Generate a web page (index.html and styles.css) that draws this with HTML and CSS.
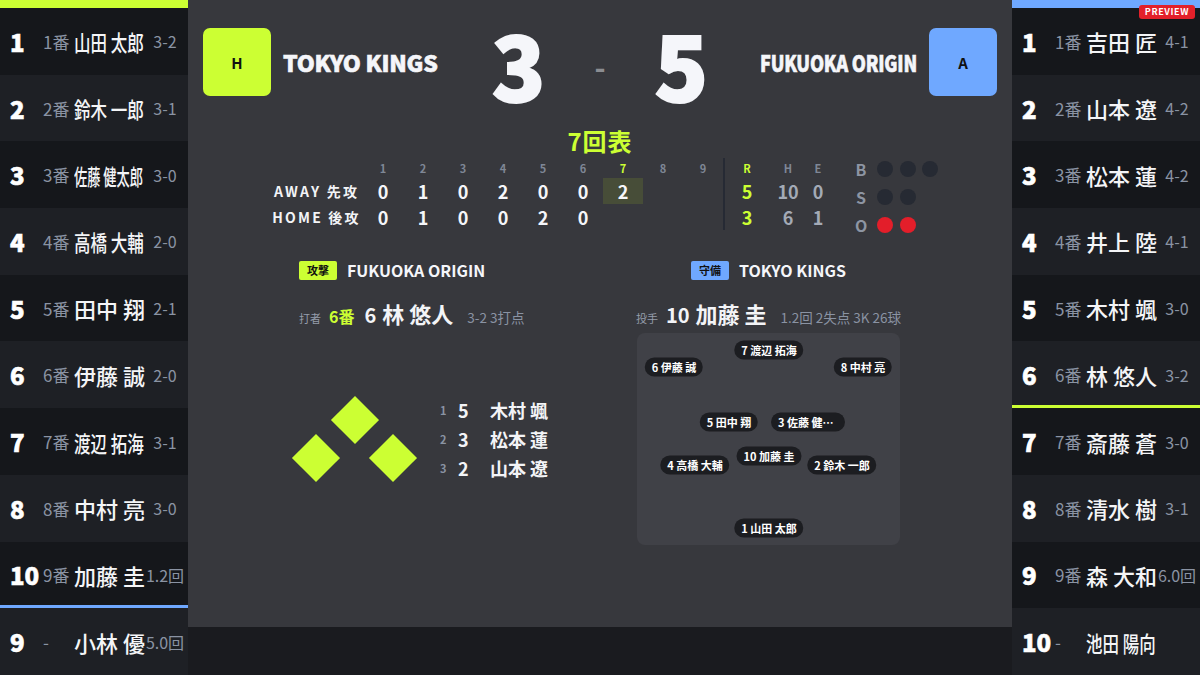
FILE: index.html
```html
<!DOCTYPE html>
<html lang="ja">
<head>
<meta charset="utf-8">
<title>Scoreboard</title>
<link rel="stylesheet" href="styles.css">
</head>
<body>
<div class="app">
  <aside class="lineup">
    <div class="topbar lime"></div>
    <div class="row"><span class="no">1</span><span class="ord">1番</span><span class="name"><span class="fit4">山田 太郎</span></span><span class="stat">3-2</span></div>
    <div class="row"><span class="no">2</span><span class="ord">2番</span><span class="name"><span class="fit4">鈴木 一郎</span></span><span class="stat">3-1</span></div>
    <div class="row"><span class="no">3</span><span class="ord">3番</span><span class="name"><span class="fit5">佐藤 健太郎</span></span><span class="stat">3-0</span></div>
    <div class="row"><span class="no">4</span><span class="ord">4番</span><span class="name"><span class="fit4">高橋 大輔</span></span><span class="stat">2-0</span></div>
    <div class="row"><span class="no">5</span><span class="ord">5番</span><span class="name">田中 翔</span><span class="stat">2-1</span></div>
    <div class="row"><span class="no">6</span><span class="ord">6番</span><span class="name">伊藤 誠</span><span class="stat">2-0</span></div>
    <div class="row"><span class="no">7</span><span class="ord">7番</span><span class="name"><span class="fit4">渡辺 拓海</span></span><span class="stat">3-1</span></div>
    <div class="row"><span class="no">8</span><span class="ord">8番</span><span class="name">中村 亮</span><span class="stat">3-0</span></div>
    <div class="row cut-blue"><span class="no">10</span><span class="ord">9番</span><span class="name">加藤 圭</span><span class="stat">1.2回</span></div>
    <div class="row"><span class="no">9</span><span class="ord">-</span><span class="name">小林 優</span><span class="stat">5.0回</span></div>
  </aside>

  <main class="center">
    <div class="panel">
      <header class="match">
        <div class="team">
          <div class="badge lime">H</div>
          <div class="tname">TOKYO KINGS</div>
        </div>
        <div class="score"><span class="pts">3</span><span class="dash">-</span><span class="pts">5</span></div>
        <div class="team right">
          <div class="tname squeeze">FUKUOKA ORIGIN</div>
          <div class="badge blue">A</div>
        </div>
      </header>

      <div class="inning">7回表</div>

      <div class="board-row">
        <div class="board">
          <div class="vsep"></div>
          <div class="lbl"></div>
          <div class="hd">1</div><div class="hd">2</div><div class="hd">3</div><div class="hd">4</div><div class="hd">5</div><div class="hd">6</div><div class="hd cur">7</div><div class="hd">8</div><div class="hd">9</div>
          <div class="hd cur">R</div><div class="hd">H</div><div class="hd">E</div>

          <div class="lbl">AWAY 先攻</div>
          <div class="v">0</div><div class="v">1</div><div class="v">0</div><div class="v">2</div><div class="v">0</div><div class="v">0</div><div class="v now">2</div><div class="v"></div><div class="v"></div>
          <div class="v run">5</div><div class="v dim">10</div><div class="v dim">0</div>

          <div class="lbl">HOME 後攻</div>
          <div class="v">0</div><div class="v">1</div><div class="v">0</div><div class="v">0</div><div class="v">2</div><div class="v">0</div><div class="v"></div><div class="v"></div><div class="v"></div>
          <div class="v run">3</div><div class="v dim">6</div><div class="v dim">1</div>
        </div>

        <div class="bso">
          <div class="k">B</div><div class="dots"><span class="dot"></span><span class="dot"></span><span class="dot"></span></div>
          <div class="k">S</div><div class="dots"><span class="dot"></span><span class="dot"></span></div>
          <div class="k">O</div><div class="dots"><span class="dot on"></span><span class="dot on"></span></div>
        </div>
      </div>

      <div class="lower">
        <section class="att">
          <div class="side-head"><span class="tag lime">攻撃</span><span class="side-team">FUKUOKA ORIGIN</span></div>
          <div class="pline">
            <span class="role">打者</span><span class="bno">6番</span><span class="pno">6</span><span class="pname">林 悠人</span><span class="pstat">3-2 3打点</span>
          </div>
          <div class="runners">
            <div class="bases">
              <span class="base b2"></span>
              <span class="base b3"></span>
              <span class="base b1"></span>
            </div>
            <div class="rlist">
              <span class="ri">1</span><span class="rn">5</span><span class="rname">木村 颯</span>
              <span class="ri">2</span><span class="rn">3</span><span class="rname">松本 蓮</span>
              <span class="ri">3</span><span class="rn">2</span><span class="rname">山本 遼</span>
            </div>
          </div>
        </section>

        <section class="def">
          <div class="side-head"><span class="tag blue">守備</span><span class="side-team">TOKYO KINGS</span></div>
          <div class="pline">
            <span class="role">投手</span><span class="pno">10</span><span class="pname">加藤 圭</span><span class="pstat">1.2回 2失点 3K 26球</span>
          </div>
          <div class="field">
            <span class="chip f7">7 渡辺 拓海</span>
            <span class="chip f6">6 伊藤 誠</span>
            <span class="chip f8">8 中村 亮</span>
            <span class="chip f5">5 田中 翔</span>
            <span class="chip f3 cut">3 佐藤 健太郎</span>
            <span class="chip f10">10 加藤 圭</span>
            <span class="chip f4">4 高橋 大輔</span>
            <span class="chip f2">2 鈴木 一郎</span>
            <span class="chip f1">1 山田 太郎</span>
          </div>
        </section>
      </div>
    </div>
  </main>

  <aside class="lineup">
    <div class="topbar blue"></div>
    <div class="row"><span class="no">1</span><span class="ord">1番</span><span class="name">吉田 匠</span><span class="stat">4-1</span></div>
    <div class="row"><span class="no">2</span><span class="ord">2番</span><span class="name">山本 遼</span><span class="stat">4-2</span></div>
    <div class="row"><span class="no">3</span><span class="ord">3番</span><span class="name">松本 蓮</span><span class="stat">4-2</span></div>
    <div class="row"><span class="no">4</span><span class="ord">4番</span><span class="name">井上 陸</span><span class="stat">4-1</span></div>
    <div class="row"><span class="no">5</span><span class="ord">5番</span><span class="name">木村 颯</span><span class="stat">3-0</span></div>
    <div class="row cut-lime"><span class="no">6</span><span class="ord">6番</span><span class="name">林 悠人</span><span class="stat">3-2</span></div>
    <div class="row"><span class="no">7</span><span class="ord">7番</span><span class="name">斎藤 蒼</span><span class="stat">3-0</span></div>
    <div class="row"><span class="no">8</span><span class="ord">8番</span><span class="name">清水 樹</span><span class="stat">3-1</span></div>
    <div class="row"><span class="no">9</span><span class="ord">9番</span><span class="name">森 大和</span><span class="stat">6.0回</span></div>
    <div class="row"><span class="no">10</span><span class="ord">-</span><span class="name"><span class="fit4">池田 陽向</span></span><span class="stat"></span></div>
    <span class="preview">PREVIEW</span>
  </aside>
</div>
</body>
</html>
```

FILE: styles.css
```css
* { box-sizing: border-box; margin: 0; padding: 0; }
html, body { width: 1200px; height: 675px; overflow: hidden; }
body {
  background: #1a1b1f;
  font-family: "Noto Sans CJK JP", "Noto Sans", sans-serif;
  color: #f3f4f7;
}
.app { display: grid; grid-template-columns: 188px 824px 188px; height: 675px; }

/* ---------- lineups ---------- */
.lineup { display: grid; grid-template-rows: 8px repeat(10, 1fr); position: relative; }
.topbar.lime { background: #ccff33; }
.topbar.blue { background: #6fa8ff; }
.row {
  display: grid;
  grid-template-columns: 33px 31px 71px 40px;
  align-items: center;
  padding-left: 10px;
  background: #15171b;
}
.row:nth-child(odd) { background: #1e2025; }
.row.cut-blue { box-shadow: inset 0 -3px 0 #6fa8ff; }
.row.cut-lime { box-shadow: inset 0 -3px 0 #ccff33; }
.no { font-size: 24px; font-weight: 900; color: #ffffff; -webkit-text-stroke: 0.6px #ffffff; }
.ord { font-size: 17px; color: #8a93a3; white-space: nowrap; }
.name { font-size: 22px; font-weight: 500; white-space: nowrap; color: #f4f5f7; }
.fit4, .fit5 { display: inline-block; transform-origin: left center; }
.fit4 { transform: scaleX(0.75); }
.fit5 { transform: scaleX(0.6); }
.stat { font-size: 16px; color: #8a93a3; text-align: center; white-space: nowrap; }
.preview {
  position: absolute; top: 5px; right: 5px;
  height: 14px; line-height: 14px; padding: 0 6px;
  background: #e3202a; color: #fff; border-radius: 3px;
  font-size: 9px; font-weight: 700; letter-spacing: 0.6px;
}

/* ---------- centre panel ---------- */
.panel { height: 627px; background: #37383d; }
.match { display: flex; align-items: flex-start; padding: 0 15px; }
.team { flex: 1; min-width: 0; display: flex; align-items: center; gap: 12px; margin-top: 28px; }
.team.right { justify-content: flex-end; }
.badge {
  flex: none;
  width: 68px; height: 68px; border-radius: 7px;
  display: flex; align-items: center; justify-content: center;
  font-size: 15px; font-weight: 700; color: #111;
}
.badge.lime { background: #ccff33; }
.badge.blue { background: #6fa8ff; }
.tname {
  font-size: 23px; font-weight: 900; letter-spacing: -0.3px; color: #f5f6fa; white-space: nowrap;
  -webkit-text-stroke: 0.6px #f5f6fa;
}
.tname.squeeze { transform: scaleX(0.785); transform-origin: right center; }
.score { display: flex; align-items: center; gap: 49px; }
.pts { font-size: 88px; font-weight: 900; color: #f5f6fa; -webkit-text-stroke: 2px #f5f6fa; }
.dash { font-size: 30px; font-weight: 700; color: #8b8d92; margin-top: 4px; }

.inning {
  text-align: center; line-height: 28px;
  font-size: 24px; font-weight: 700; color: #ccff33; letter-spacing: 1px;
}

.board-row { display: flex; align-items: flex-start; padding-left: 82px; }
.board {
  display: grid; margin-top: 3px;
  grid-template-columns: 93px repeat(9, 40px) 2px 44px 38px 22px;
  grid-template-rows: 20px 26px 26px;
}
.vsep { grid-column: 11; grid-row: 1 / 4; background: #262a34; }
.board > div:not(.vsep) { display: flex; align-items: center; justify-content: center; }
.board > .lbl { justify-content: flex-start; font-size: 14px; font-weight: 700; letter-spacing: 2.2px; white-space: nowrap; }
.hd { font-size: 11px; font-weight: 700; color: #7f8796; }
.hd.cur { color: #ccff33; }
.v { font-size: 18px; font-weight: 700; color: #f5f6fa; }
.v.now { background: #474d38; }
.v.run { color: #ccff33; }
.v.dim { color: #a3aab6; }

.bso {
  margin-left: 26px;
  display: grid; grid-template-columns: 12px auto; grid-template-rows: repeat(3, 28px);
  column-gap: 10px; align-items: center;
}
.k { font-size: 16px; font-weight: 700; color: #8d95a3; text-align: center; }
.dots { display: flex; gap: 6.5px; }
.dot { width: 16px; height: 16px; border-radius: 50%; background: #262a33; }
.dot.on { background: #e31e2a; }

/* ---------- lower ---------- */
.lower { display: flex; gap: 38px; margin: 21px 0 0 111px; }
.att { width: 300px; }
.def { width: 263px; display: flex; flex-direction: column; align-items: center; }
.side-head { display: flex; align-items: center; gap: 10px; height: 20px; }
.tag {
  width: 38px; height: 19px; border-radius: 2px;
  display: flex; align-items: center; justify-content: center;
  font-size: 11px; font-weight: 700; color: #111;
}
.tag.lime { background: #ccff33; }
.tag.blue { background: #6fa8ff; }
.side-team { font-size: 16px; font-weight: 700; color: #f5f6fa; white-space: nowrap; }

.pline { display: flex; align-items: baseline; height: 24px; line-height: 24px; margin-top: 21px; white-space: nowrap; }
.role { font-size: 11px; color: #959dab; margin-right: 8px; }
.bno { font-size: 16px; font-weight: 700; color: #ccff33; margin-right: 10px; }
.pno { font-size: 20px; font-weight: 700; margin-right: 6px; }
.pname { font-size: 22px; font-weight: 700; margin-right: 14px; }
.pstat { font-size: 13.5px; color: #8a93a3; }

.runners { height: 212px; margin-top: 8px; display: flex; align-items: center; }
.bases {
  display: grid;
  grid-template-columns: repeat(3, 34px); grid-template-rows: repeat(2, 34px);
  column-gap: 4.5px; row-gap: 4px;
}
.base { background: #ccff33; transform: rotate(45deg); }
.b2 { grid-column: 2; grid-row: 1; }
.b3 { grid-column: 1; grid-row: 2; }
.b1 { grid-column: 3; grid-row: 2; }
.rlist {
  margin-left: 30px;
  display: grid; grid-template-columns: 12px 26px auto; column-gap: 6px;
  grid-auto-rows: 29px; align-items: center;
}
.ri { font-size: 11px; font-weight: 700; color: #8a93a3; }
.rn { font-size: 18px; font-weight: 700; }
.rname { font-size: 18px; font-weight: 700; white-space: nowrap; }

.field { position: relative; width: 263px; height: 212px; margin-top: 8px; background: #404147; border-radius: 8px; }
.chip {
  position: absolute; transform: translate(-50%, -50%);
  height: 19px; line-height: 19px; padding: 0 7px; border-radius: 10px;
  background: #1c1d21; color: #fff; font-size: 11px; font-weight: 700; white-space: nowrap;
}
.chip.cut { max-width: 74px; overflow: hidden; text-overflow: ellipsis; }
.f7 { left: 132px; top: 17px; }
.f6 { left: 37px; top: 34px; }
.f8 { left: 226px; top: 34px; }
.f5 { left: 92px; top: 89px; }
.f3 { left: 171px; top: 89px; }
.f10 { left: 132px; top: 123px; }
.f4 { left: 58px; top: 132px; }
.f2 { left: 205px; top: 132px; }
.f1 { left: 132px; top: 195px; }
```
